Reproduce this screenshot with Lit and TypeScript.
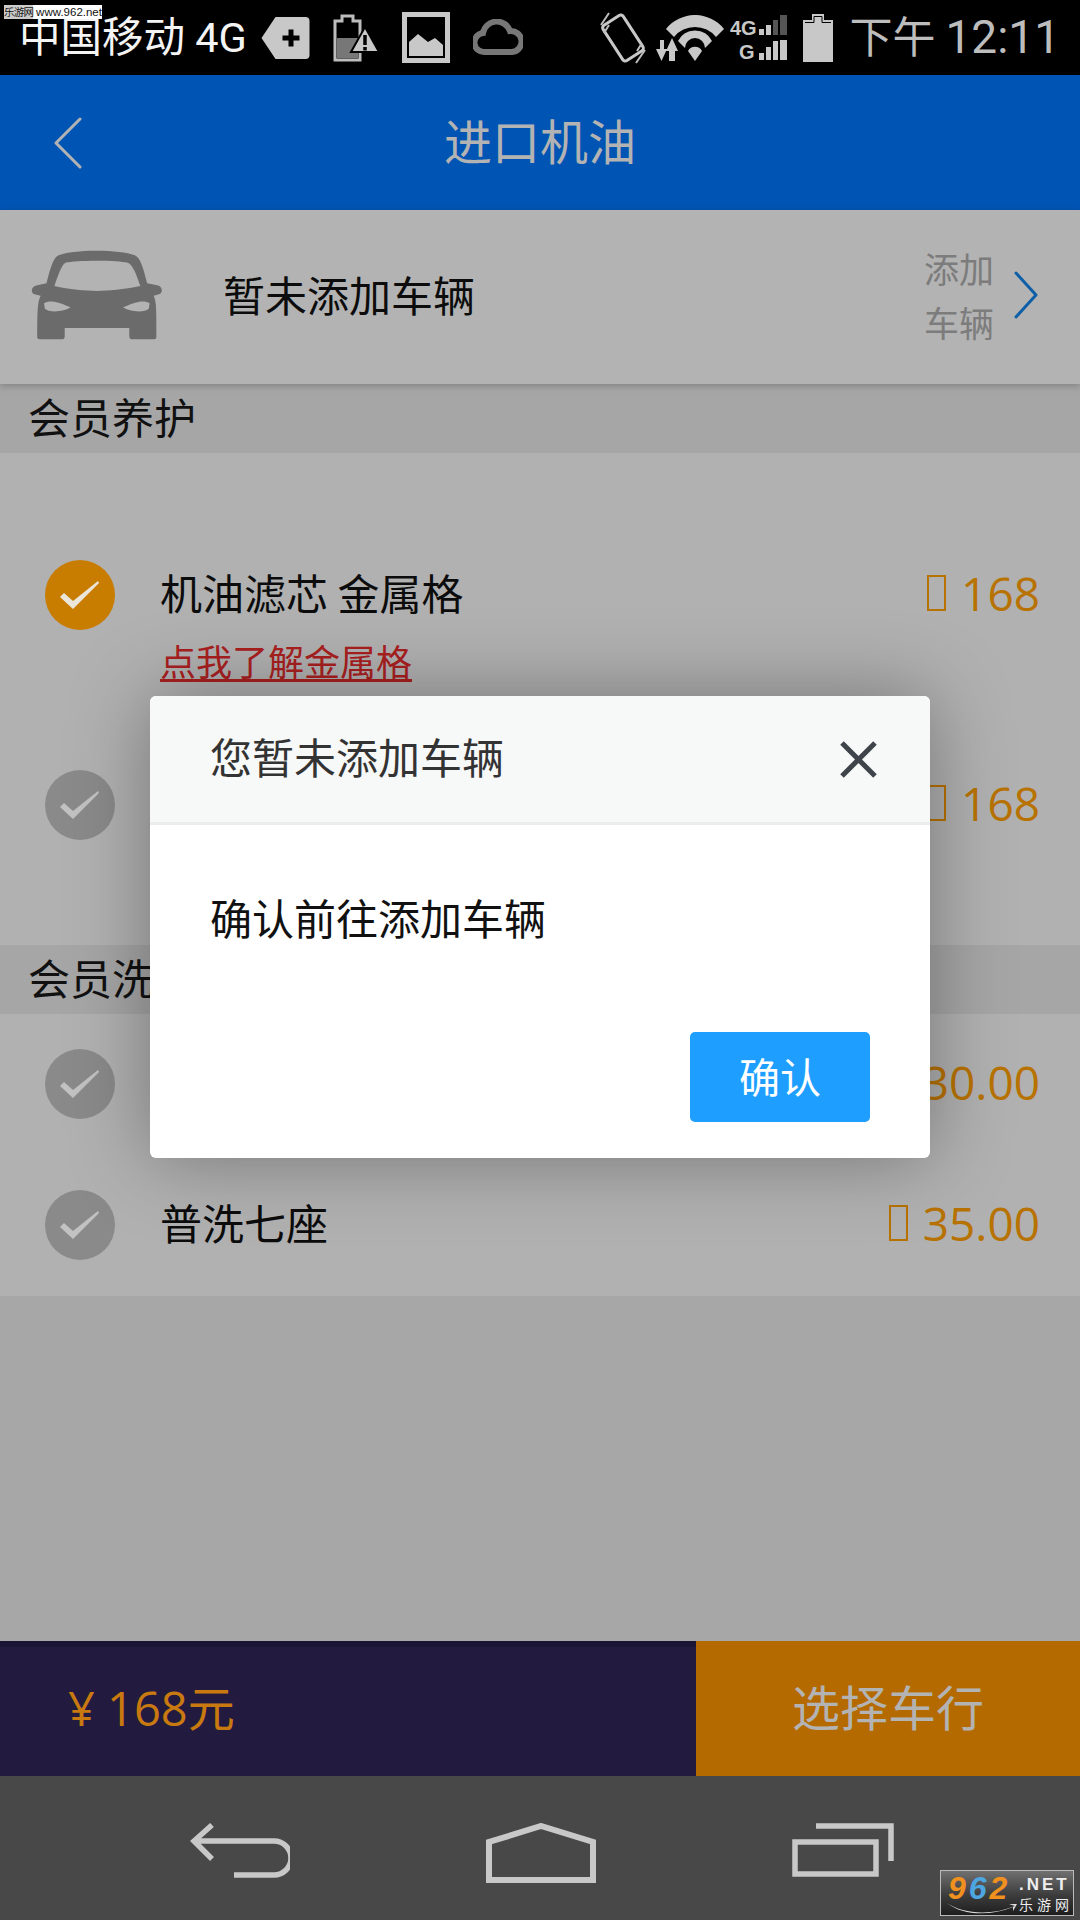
import { LitElement, html, css, svg } from "lit";
import { customElement } from "lit/decorators.js";

const checkIcon = svg`<svg class="tick" viewBox="0 0 70 70" width="70" height="70"><path d="M15 37 L19 33 L28 41 L53 21 L54 23 L28 49 Z" fill="currentColor"/></svg>`;

@customElement("app-root")
export class AppRoot extends LitElement {
  static styles = css`
    :host {
      display: block;
      width: 1080px;
      height: 1920px;
      position: relative;
      overflow: hidden;
      background: #a7a7a7;
      font-family: "Noto Sans CJK SC", "Noto Sans", sans-serif;
      color: #0c0c0c;
    }
    .page { display: flex; flex-direction: column; height: 100%; }

    /* system status bar */
    .status {
      height: 75px; flex: none; background: #000; display: flex; align-items: center;
      justify-content: space-between; padding: 0 20px 0 19px; box-sizing: border-box;
      font-family: Roboto, "Noto Sans CJK SC", sans-serif;
    }
    .status svg { display: block; flex: none; }
    .status-group { display: flex; align-items: center; }
    .carrier { color: #f4f4f4; font-size: 41.5px; line-height: 34px; margin-right: 14px; white-space: nowrap; }
    .gap-left { margin-left: 23px; }
    .gap-wifi { margin-left: 10px; }
    .gap-signal { margin-left: 6px; }
    .gap-battery { margin-left: 15px; }
    .clock { color: #bdbdbd; font-size: 43px; line-height: 60px; margin-left: 16px; white-space: nowrap; }
    .clock b { font-weight: 400; font-size: 46px; margin-left: 10px; }

    /* title bar */
    .title-bar {
      height: 135px; flex: none; background: #0054b4; display: flex; align-items: center;
      justify-content: center; position: relative; color: #b3b3b3; font-size: 48px;
      padding-bottom: 7px; box-sizing: border-box;
    }
    .back-link { position: absolute; left: 53px; top: 42px; display: block; }

    /* vehicle row */
    .vehicle {
      height: 174px; flex: none; background: #b3b3b3; display: flex; align-items: center;
      padding: 0 42px 4px 31px; box-sizing: border-box; position: relative;
      box-shadow: 0 2px 7px rgba(0, 0, 0, 0.22); z-index: 1;
    }
    .vehicle-name { font-size: 42px; margin-left: 60px; flex: 1; padding-bottom: 4px; }
    .vehicle-add { width: 72px; font-size: 35px; line-height: 54px; color: #7c7c7c; text-align: center; }
    .vehicle-arrow { margin-left: 19px; display: block; }

    /* service lists */
    .section-head {
      height: 69px; flex: none; background: #a6a6a6; display: flex; align-items: center;
      padding: 0 0 6px 28px; box-sizing: border-box; font-size: 42px; color: #111;
    }
    .list { background: #b1b1b1; flex: none; box-sizing: border-box; }
    .list.care { height: 492px; padding-top: 107px; }
    .list.wash { height: 282px; }
    .row { display: flex; align-items: center; height: 70px; padding: 0 40px 0 45px; }
    .list.wash .row { height: 140px; }
    .list.wash .row:last-child { height: 142px; }
    .check {
      width: 70px; height: 70px; border-radius: 50%; flex: none; background: #8a8a8a; color: #c2c2c2;
      margin-right: 45px;
    }
    .check.on { background: #c87c00; color: #ebe6da; }
    .tick { display: block; }
    .row-title { flex: 1; font-size: 42px; color: #0c0c0c; white-space: nowrap; padding-bottom: 7px; }
    .price {
      font-family: "Open Sans", sans-serif; font-size: 46px; color: #b87200; display: flex;
      align-items: center; white-space: nowrap; padding-bottom: 4px;
    }
    .price::before {
      content: ""; width: 19px; height: 36px; box-sizing: border-box; border: 2.5px solid #b87200;
      margin-right: 15px;
    }
    .learn {
      margin: 8px 0 88px 160px; height: 44px; line-height: 44px; font-size: 36px;
      color: #a9201f; text-decoration: underline; text-decoration-thickness: 3px; text-underline-offset: 3px;
    }

    .spacer { flex: 1; }

    /* order summary */
    .summary { height: 135px; flex: none; display: flex; }
    .total {
      width: 696px; background: #231a3f; border-top: 6px solid #1b1535; box-sizing: border-box;
      display: flex; align-items: center; padding: 0 0 12px 68px; font-size: 47px; color: #c87a10;
      font-family: "Open Sans", "Noto Sans CJK SC", sans-serif;
    }
    .choose {
      flex: 1; background: #b56a00; color: #b3b3b3; font-size: 48px; display: flex;
      align-items: center; justify-content: center; padding-bottom: 8px;
    }

    /* system navigation bar */
    .nav {
      height: 144px; flex: none; background: #484848; display: flex; align-items: flex-start;
      gap: 196px; padding: 47px 0 0 190px; box-sizing: border-box;
    }
    .nav svg { display: block; flex: none; }

    /* dialog */
    .dialog {
      position: absolute; left: 150px; top: 696px; width: 780px; height: 462px; background: #fff;
      border-radius: 6px; box-shadow: 0 0 80px rgba(0, 0, 0, 0.34); z-index: 2;
      display: flex; flex-direction: column; overflow: hidden;
    }
    .dialog-head {
      height: 129px; flex: none; box-sizing: border-box; background: #f7f8f8; border-bottom: 3px solid #ececec;
      display: flex; align-items: center; justify-content: space-between; padding: 0 53px 0 60px;
      font-size: 42px; color: #333;
    }
    .dialog-head span { padding-bottom: 7px; }
    .dialog-body { flex: 1; padding: 64px 60px 0; font-size: 42px; line-height: 56px; color: #111; }
    .dialog-foot { display: flex; justify-content: flex-end; padding: 0 60px 36px; }
    .confirm {
      width: 180px; height: 90px; border-radius: 5px; background: #1e9fff; color: #fff; font-size: 41px;
      display: flex; align-items: center; justify-content: center; padding-bottom: 5px; box-sizing: border-box;
    }

    /* site stamps */
    .stamp-top {
      position: absolute; left: 4px; top: 5px; width: 98px; height: 14px; background: #fff; color: #111;
      display: flex; align-items: center; font-size: 11.5px; line-height: 14px; z-index: 3; white-space: nowrap;
      font-family: "Liberation Sans", "Noto Sans CJK SC", sans-serif; overflow: hidden;
    }
    .stamp-top span { background: #ccc; margin-right: 3px; letter-spacing: -0.8px; font-size: 10.5px; }
    .stamp-logo {
      position: absolute; left: 940px; top: 1870px; width: 134px; height: 46px; box-sizing: border-box;
      border: 1px solid #bbb; background: linear-gradient(#707070, #3c3c3c 55%, #1e1e1e); z-index: 3;
      font-family: "Liberation Sans", "Noto Sans CJK SC", sans-serif; overflow: hidden;
    }
    .logo-num {
      position: absolute; left: 7px; top: 0; font-size: 32px; line-height: 34px; font-weight: 700; font-style: italic;
      color: #f0901e; letter-spacing: 3px; white-space: nowrap;
    }
    .logo-num i { color: #4da6e0; }
    .logo-net { position: absolute; left: 78px; top: 4px; font-size: 17px; line-height: 20px; font-weight: 700; color: #eee; letter-spacing: 3px; white-space: nowrap; }
    .logo-cn { position: absolute; left: 78px; top: 25px; font-size: 14px; line-height: 18px; color: #eee; letter-spacing: 4px; white-space: nowrap; }
    .logo-swoosh { position: absolute; left: 6px; top: 31px; display: block; }
  `;

  private statusLeft() {
    return html`
      <div class="status-group">
        <span class="carrier">中国移动 4G</span>
        <svg width="49" height="42" viewBox="0 0 48 42">
          <path d="M14 0 H44 Q48 0 48 4 V38 Q48 42 44 42 H14 L0 21 Z" fill="#c8c8c8"/>
          <path d="M21 21 H38 M29.5 12.5 V29.5" stroke="#000" stroke-width="5"/>
        </svg>
        <svg class="gap-left" width="46" height="48" viewBox="0 0 46 48">
          <path d="M2 7 H9 V2 H20 V7 H27 V46 H2 Z" fill="none" stroke="#bdbdbd" stroke-width="3"/>
          <rect x="4" y="24" width="21" height="20" fill="#777"/>
          <path d="M18 38 L32 13 L46 38 Z" fill="#c8c8c8" stroke="#000" stroke-width="2"/>
          <path d="M32 21 V31 M32 33 V36.500" stroke="#000" stroke-width="3.500"/>
        </svg>
        <svg class="gap-left" width="48" height="51" viewBox="0 0 48 51">
          <rect x="2.500" y="2.500" width="43" height="46" fill="none" stroke="#c8c8c8" stroke-width="5"/>
          <rect x="5" y="5" width="38" height="41" fill="#000"/>
          <path d="M7 30 L16 22 L26 30 L33 26 L41 33 V44 H7 Z" fill="#c8c8c8"/>
        </svg>
        <svg class="gap-left" width="50" height="37" viewBox="0 0 50 37">
          <path d="M12 33 A9.500 9.500 0 0 1 10 14 A14 14 0 0 1 37 12 A10.500 10.500 0 0 1 39 33 Z" fill="none" stroke="#777" stroke-width="6"/>
        </svg>
      </div>`;
  }

  private statusRight() {
    return html`
      <div class="status-group">
        <svg width="46" height="54" viewBox="0 0 46 54">
          <rect x="-12" y="-21" width="24" height="42" rx="3" transform="translate(23 27) rotate(-33)" fill="none" stroke="#c8c8c8" stroke-width="3"/>
          <path d="M1 14 L9 2 M4 22 L9 14 M37 40 L42 32 M36 52 L45 39" stroke="#bdbdbd" stroke-width="2"/>
        </svg>
        <svg class="gap-wifi" width="68" height="46" viewBox="0 0 68 46">
          <path d="M10 14 A37 37 0 0 1 68 14 L60 22 A27 27 0 0 0 18 22 Z M22 26 A19 19 0 0 1 56 26 L49 33 A10 10 0 0 0 29 33 Z M32 36 A8 8 0 0 1 46 36 L39 46 Z" fill="#c8c8c8"/>
          <path d="M0 34 H4 V25 H8 V34 H11 L5.500 46 Z M13 46 V36 H10 L16 23 L22 36 H19 V46 Z" fill="#c8c8c8"/>
        </svg>
        <svg class="gap-signal" width="58" height="54" viewBox="0 -4 58 54">
          <text x="0" y="20" font-family="Liberation Sans" font-weight="700" font-size="20" fill="#c8c8c8">4G</text>
          <text x="9" y="44" font-family="Liberation Sans" font-weight="700" font-size="20" fill="#c8c8c8">G</text>
          <path d="M29 14 H34 V20 H29 Z M36 10 H41 V20 H36 Z" fill="#c8c8c8"/>
          <path d="M43 5 H48 V20 H43 Z M50 0 H57 V20 H50 Z" fill="#555"/>
          <path d="M29 38 H34 V45 H29 Z M36 32 H41 V45 H36 Z M43 26 H48 V45 H43 Z M50 25 H57 V45 H50 Z" fill="#c8c8c8"/>
        </svg>
        <svg class="gap-battery" width="30" height="48" viewBox="0 0 30 48">
          <path d="M0 6 H9 V0 H21 V6 H30 V48 H0 Z" fill="#c8c8c8"/>
          <path d="M2 8.500 H11 V2.500 H19 V8.500 H28" fill="none" stroke="#000" stroke-width="1"/>
        </svg>
        <span class="clock">下午<b>12:11</b></span>
      </div>`;
  }

  private carIcon() {
    return svg`<svg width="132" height="90" viewBox="92 515 380 262">
      <path fill-rule="evenodd" fill="#6b6b6b" d="M280 517 C230 517 195 522 170 530 C155 538 148 560 135 612 L105 618 C90 622 88 640 100 644 L118 648 C110 665 108 680 108 770 Q108 775 115 775 L180 775 Q188 775 188 765 L188 742 L376 742 L376 765 Q376 775 385 775 L448 775 Q455 775 455 768 C455 690 455 665 447 648 L462 644 C475 640 473 622 460 618 L428 612 C415 560 408 538 392 530 C368 522 330 517 280 517 Z
      M282 546 C240 546 205 548 190 552 C178 560 168 590 158 620 C200 630 250 634 282 634 C315 634 360 630 408 620 C398 590 388 560 372 552 C355 548 325 546 282 546 Z
      M128 670 C145 658 175 668 205 682 C185 696 140 698 130 685 Z
      M435 670 C418 658 388 668 358 682 C378 696 423 698 433 685 Z"/>
    </svg>`;
  }

  private row(on: boolean, price: string, title = "") {
    return html`
      <div class="row">
        <div class="check ${on ? "on" : ""}">${checkIcon}</div>
        <div class="row-title">${title}</div>
        <div class="price">${price}</div>
      </div>`;
  }

  render() {
    return html`
      <div class="page">
        <div class="status">${this.statusLeft()}${this.statusRight()}</div>
        <div class="title-bar">
          <svg class="back-link" width="30" height="52" viewBox="0 0 30 52">
            <path d="M27 2 L3 26 L27 50" fill="none" stroke="#b3b3b3" stroke-width="3" stroke-linecap="round" stroke-linejoin="round"/>
          </svg>
          进口机油
        </div>
        <div class="vehicle">
          ${this.carIcon()}
          <div class="vehicle-name">暂未添加车辆</div>
          <div class="vehicle-add">添加<br />车辆</div>
          <svg class="vehicle-arrow" width="24" height="48" viewBox="0 0 24 48">
            <path d="M2 2 L22 24 L2 46" fill="none" stroke="#0f5fa8" stroke-width="3" stroke-linecap="round" stroke-linejoin="round"/>
          </svg>
        </div>
        <div class="section-head">会员养护</div>
        <div class="list care">
          ${this.row(true, "168", "机油滤芯 金属格")}
          <div class="learn">点我了解金属格</div>
          ${this.row(false, "168")}
        </div>
        <div class="section-head">会员洗车</div>
        <div class="list wash">
          ${this.row(false, "30.00")}
          ${this.row(false, "35.00", "普洗七座")}
        </div>
        <div class="spacer"></div>
        <div class="summary">
          <div class="total">¥ 168元</div>
          <div class="choose">选择车行</div>
        </div>
        <div class="nav">
          <svg width="100" height="56" viewBox="0 0 100 56">
            <path d="M22 2 L4 18 L22 36 M4 18 H84 A16 16 0 0 1 84 52 H44" fill="none" stroke="#c8c8c8" stroke-width="5.500"/>
          </svg>
          <svg width="110" height="60" viewBox="0 0 110 60">
            <path d="M3 57 V19 L55 3 L107 19 V57 Z" fill="none" stroke="#c8c8c8" stroke-width="6"/>
          </svg>
          <svg width="102" height="54" viewBox="0 0 102 54">
            <path d="M3 19 H84 V51 H3 Z M24 3 H99 V38" fill="none" stroke="#c8c8c8" stroke-width="5.500"/>
          </svg>
        </div>
      </div>

      <div class="dialog">
        <div class="dialog-head">
          <span>您暂未添加车辆</span>
          <svg width="37" height="37" viewBox="0 0 37 37">
            <path d="M2 2 L35 35 M35 2 L2 35" stroke="#3f444a" stroke-width="5"/>
          </svg>
        </div>
        <div class="dialog-body">确认前往添加车辆</div>
        <div class="dialog-foot"><div class="confirm">确认</div></div>
      </div>

      <div class="stamp-top"><span>乐游网</span>www.962.net</div>
      <div class="stamp-logo">
        <svg class="logo-swoosh" width="70" height="14" viewBox="0 0 70 14">
          <path d="M0 1 C16 12 44 14 68 4 L62 2 L70 2 L66 9 L66 5 C44 14 16 14 0 1 Z" fill="#ddd"/>
        </svg>
        <div class="logo-num">9<i>6</i>2</div>
        <div class="logo-net">.NET</div>
        <div class="logo-cn">乐游网</div>
      </div>
    `;
  }
}
